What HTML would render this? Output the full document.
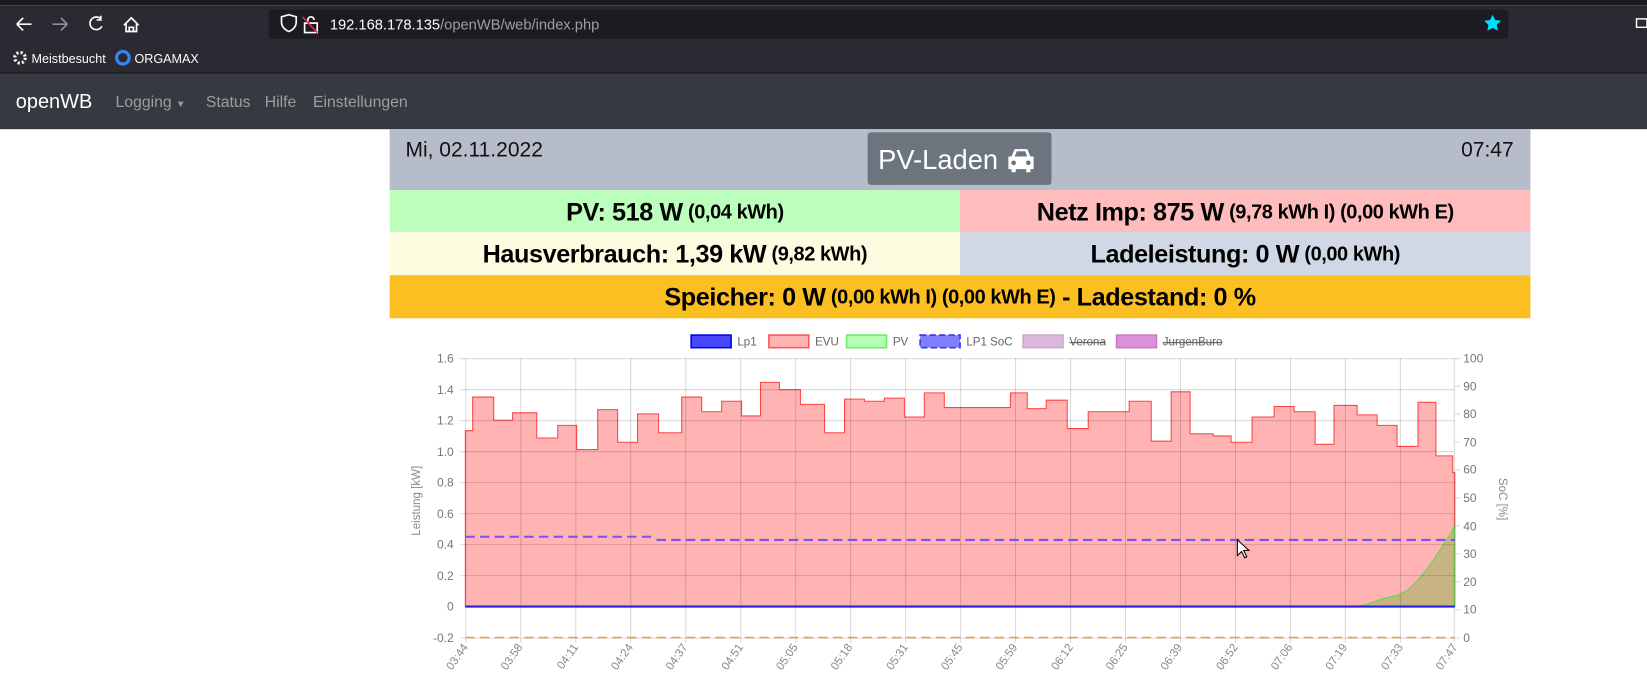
<!DOCTYPE html>
<html><head><meta charset="utf-8"><style>
html,body{margin:0;padding:0;width:1647px;height:685px;overflow:hidden;background:#fff;font-family:"Liberation Sans",sans-serif}
#w{position:absolute;left:0;top:0;width:1568px;height:652px;transform:scale(1.0504);transform-origin:0 0}
.a{position:absolute}
.row{position:absolute;display:flex;align-items:center;justify-content:center;font-weight:bold;font-size:24px;color:#000;letter-spacing:-0.4px;padding-top:3px;box-sizing:border-box}
.row small{font-size:19px;margin-left:5px;font-weight:bold}
</style></head><body><div id="w">
<div class="a" style="left:0;top:0;width:1568px;height:5px;background:#1c1b22"></div>
<div class="a" style="left:0;top:5px;width:1568px;height:64px;background:#2b2a33"></div>
<div class="a" style="left:0;top:69px;width:1568px;height:1px;background:#0c0c0d"></div>
<div class="a" style="left:256px;top:9px;width:1180px;height:28px;background:#1c1b22;border-radius:4px"></div>
<svg class="a" style="left:0;top:0" width="1568" height="70">
<g stroke="#fbfbfe" stroke-width="1.6" fill="none">
<path d="M16,23 H30 M16,23 l6,-6 M16,23 l6,6"/>
<path d="M50,23 H64 M64,23 l-6,-6 M64,23 l-6,6" stroke="#8f8f9d"/>
<path d="M96,18 A6,6 0 1 0 97,25 M96,15 V19 H92"/>
<path d="M118,24 L125,17 L132,24 M120,22 V30 H130 V22 M123,30 V26 H127 V30"/>
<path d="M268,16 l7,-2 l7,2 v5 c0,5 -4,8 -7,9 c-3,-1 -7,-4 -7,-9z"/>
<path d="M290,22 h12 v9 h-12z M293,22 v-3 a3,3 0 0 1 6,0"/>
</g>
<path d="M288,16 L302,31" stroke="#e22850" stroke-width="1.6"/>
<path d="M1421,14 l2.5,5 5.5,.8 -4,3.9 1,5.5 -5,-2.6 -5,2.6 1,-5.5 -4,-3.9 5.5,-.8z" fill="#00ddff"/>
<path d="M1558,18 h10 v8 h-10z" stroke="#fbfbfe" fill="none" stroke-width="1.4"/>
<circle cx="19" cy="55" r="5" fill="none" stroke="#fbfbfe" stroke-width="3" stroke-dasharray="2 2"/>
<circle cx="117" cy="55" r="6" fill="none" stroke="#3b82f6" stroke-width="3"/>
<text x="314" y="28" font-size="14" fill="#fbfbfe" font-family="Liberation Sans">192.168.178.135<tspan fill="#9e9ea6">/openWB/web/index.php</tspan></text>
<text x="30" y="60" font-size="12" fill="#fbfbfe" font-family="Liberation Sans">Meistbesucht</text>
<text x="128" y="60" font-size="12" fill="#fbfbfe" font-family="Liberation Sans">ORGAMAX</text>
</svg>
<div class="a" style="left:0;top:70px;width:1568px;height:53px;background:#343a40"></div>
<div class="a" style="left:15px;top:87px;font-size:19px;color:#fff">openWB</div>
<div class="a" style="left:110px;top:89px;font-size:15px;color:rgba(255,255,255,.5)">Logging <span style="font-size:9px">▼</span></div>
<div class="a" style="left:196px;top:89px;font-size:15px;color:rgba(255,255,255,.5)">Status</div>
<div class="a" style="left:252px;top:89px;font-size:15px;color:rgba(255,255,255,.5)">Hilfe</div>
<div class="a" style="left:298px;top:89px;font-size:15px;color:rgba(255,255,255,.5)">Einstellungen</div>

<div class="a" style="left:371px;top:123px;width:1086px;height:58px;background:#b6bcc9"></div>
<div class="a" style="left:386px;top:132px;font-size:20px;color:#111">Mi, 02.11.2022</div>
<div class="a" style="left:1391px;top:132px;font-size:20px;color:#111">07:47</div>
<div class="a" style="left:826px;top:126px;width:175px;height:50px;background:#6c757d;border-radius:3px;color:#fff;font-size:26px;line-height:52px;text-align:left;box-sizing:border-box;padding-left:10px">PV-Laden</div>
<svg class="a" style="left:957px;top:139px" width="30" height="26" viewBox="0 0 30 26"><path d="M6,10 L9,3 H21 L24,10 H27 V22 H24 V25 H20 V22 H10 V25 H6 V22 H3 V10z" fill="#fff"/><path d="M9,10 L11,5 H19 L21,10z" fill="#6c757d"/><circle cx="8" cy="16" r="2.2" fill="#6c757d"/><circle cx="22" cy="16" r="2.2" fill="#6c757d"/></svg>
<div class="row" style="left:371px;top:181px;width:543px;height:40px;background:#bcfebc">PV: 518 W <small>(0,04 kWh)</small></div>
<div class="row" style="left:914px;top:181px;width:543px;height:40px;background:#febcbc">Netz Imp: 875 W <small>(9,78 kWh I) (0,00 kWh E)</small></div>
<div class="row" style="left:371px;top:221px;width:543px;height:41px;background:#fdfce0">Hausverbrauch: 1,39 kW <small>(9,82 kWh)</small></div>
<div class="row" style="left:914px;top:221px;width:543px;height:41px;background:#d0d7e5">Ladeleistung: 0 W <small>(0,00 kWh)</small></div>
<div class="row" style="left:371px;top:262px;width:1086px;height:41px;background:#fcbf22">Speicher: 0 W <small>(0,00 kWh I) (0,00 kWh E)</small>&nbsp;- Ladestand: 0 %</div>

<svg class="a" style="left:0;top:0" width="1568" height="652" font-family="Liberation Sans" font-size="11" fill="#666">
<g>
<rect x="658" y="319" width="38" height="12" fill="#4848ff" stroke="#0000ee" stroke-width="1.5"/><text x="702" y="329">Lp1</text>
<rect x="732" y="319" width="38" height="12" fill="#ffb3b3" stroke="#ff5555" stroke-width="1.5"/><text x="776" y="329">EVU</text>
<rect x="806" y="319" width="38" height="12" fill="#b3ffb3" stroke="#66ee66" stroke-width="1.5"/><text x="850" y="329">PV</text>
<rect x="876" y="319" width="38" height="12" fill="#8080ff" stroke="#3333ff" stroke-width="1.5" stroke-dasharray="6 3"/><text x="920" y="329">LP1 SoC</text>
<rect x="974" y="319" width="38" height="12" fill="#dcb8dc" stroke="#ccaacc" stroke-width="1.5"/><text x="1018" y="329" text-decoration="line-through">Verona</text>
<rect x="1063" y="319" width="38" height="12" fill="#dc90dc" stroke="#cc77cc" stroke-width="1.5"/><text x="1107" y="329" text-decoration="line-through">JurgenBuro</text>
</g>
<path d="M443,577 V410 H450 V378 H470 V400 H488 V393 H511 V417 H531 V405 H549 V428 H569 V390 H588 V421 H607 V394 H627 V412 H649 V378 H668 V392 H687 V382 H706 V396 H724 V364 H742 V371 H762 V385 H785 V412 H804 V380 H823 V382 H842 V379 H861 V397 H880 V374 H899 V388 H962 V374 H978 V389 H996 V381 H1016 V408 H1036 V392 H1075 V382 H1096 V420 H1115 V373 H1133 V413 H1155 V415 H1172 V421 H1192 V397 H1213 V387 H1232 V392 H1252 V423 H1270 V386 H1292 V395 H1311 V405 H1330 V425 H1350 V383 H1367 V434 H1383 V450 H1385 V577 Z" fill="#ffb3b3" stroke="#ff4444" stroke-width="1"/>
<path d="M1290,577 L1300,576 1310,572 1320,569 1330,567 1340,562 1350,552 1360,540 1370,525 1380,510 1385,500 V577 Z" fill="#c8b482" stroke="#55dd44" stroke-width="1"/>
<g stroke="rgba(0,0,0,0.15)" stroke-width="1">
<path d="M438,341.5 H1390 M438,371 H1385 M438,400.5 H1385 M438,430 H1385 M438,459.5 H1385 M438,489 H1385 M438,518.5 H1385 M438,548 H1385 M438,607.5 H1390 M1385,367.6 H1390 M1385,394.2 H1390 M1385,420.8 H1390 M1385,447.4 H1390 M1385,474 H1390 M1385,500.6 H1390 M1385,527.2 H1390 M1385,553.8 H1390 M1385,580.4 H1390"/>
<path d="M443.5,341 V612 M495.8,341 V612 M548.2,341 V612 M600.5,341 V612 M652.8,341 V612 M705.2,341 V612 M757.5,341 V612 M809.8,341 V612 M862.2,341 V612 M914.5,341 V612 M966.8,341 V612 M1019.2,341 V612 M1071.5,341 V612 M1123.8,341 V612 M1176.2,341 V612 M1228.5,341 V612 M1280.8,341 V612 M1333.2,341 V612 M1384.5,341 V612"/>
</g>
<path d="M443,577.5 H1385" stroke="#2222dd" stroke-width="2"/>
<path d="M443,511 H625 M625,514 H1385" stroke="#7755ee" stroke-width="2" stroke-dasharray="9 5"/>
<path d="M443,607 H1385" stroke="#e8a050" stroke-width="1.5" stroke-dasharray="9 5"/>
<path d="M1178,514 v15 l4,-4 3,6 2,-1 -3,-6 5,0z" fill="#fff" stroke="#000" stroke-width="1"/>
<g text-anchor="end" font-size="11.5" fill="#777">
<text x="432" y="345">1.6</text><text x="432" y="375">1.4</text><text x="432" y="404">1.2</text><text x="432" y="434">1.0</text><text x="432" y="463">0.8</text><text x="432" y="493">0.6</text><text x="432" y="522">0.4</text><text x="432" y="552">0.2</text><text x="432" y="581">0</text><text x="432" y="611">-0.2</text>
</g>
<g font-size="11.5" fill="#777">
<text x="1393" y="345">100</text><text x="1393" y="372">90</text><text x="1393" y="398">80</text><text x="1393" y="425">70</text><text x="1393" y="451">60</text><text x="1393" y="478">50</text><text x="1393" y="505">40</text><text x="1393" y="531">30</text><text x="1393" y="558">20</text><text x="1393" y="584">10</text><text x="1393" y="611">0</text>
</g>
<text transform="translate(400,510) rotate(-90)" font-size="11" fill="#888">Leistung [kW]</text>
<text transform="translate(1427,455) rotate(90)" font-size="11" fill="#888">SoC [%]</text>
<g font-size="11" fill="#888" text-anchor="end">
<text transform="translate(446,616) rotate(-55)">03:44</text>
<text transform="translate(498,616) rotate(-55)">03:58</text>
<text transform="translate(551,616) rotate(-55)">04:11</text>
<text transform="translate(603,616) rotate(-55)">04:24</text>
<text transform="translate(655,616) rotate(-55)">04:37</text>
<text transform="translate(708,616) rotate(-55)">04:51</text>
<text transform="translate(760,616) rotate(-55)">05:05</text>
<text transform="translate(812,616) rotate(-55)">05:18</text>
<text transform="translate(865,616) rotate(-55)">05:31</text>
<text transform="translate(917,616) rotate(-55)">05:45</text>
<text transform="translate(969,616) rotate(-55)">05:59</text>
<text transform="translate(1022,616) rotate(-55)">06:12</text>
<text transform="translate(1074,616) rotate(-55)">06:25</text>
<text transform="translate(1126,616) rotate(-55)">06:39</text>
<text transform="translate(1179,616) rotate(-55)">06:52</text>
<text transform="translate(1231,616) rotate(-55)">07:06</text>
<text transform="translate(1283,616) rotate(-55)">07:19</text>
<text transform="translate(1336,616) rotate(-55)">07:33</text>
<text transform="translate(1388,616) rotate(-55)">07:47</text>
</g>
</svg>
</div></body></html>
